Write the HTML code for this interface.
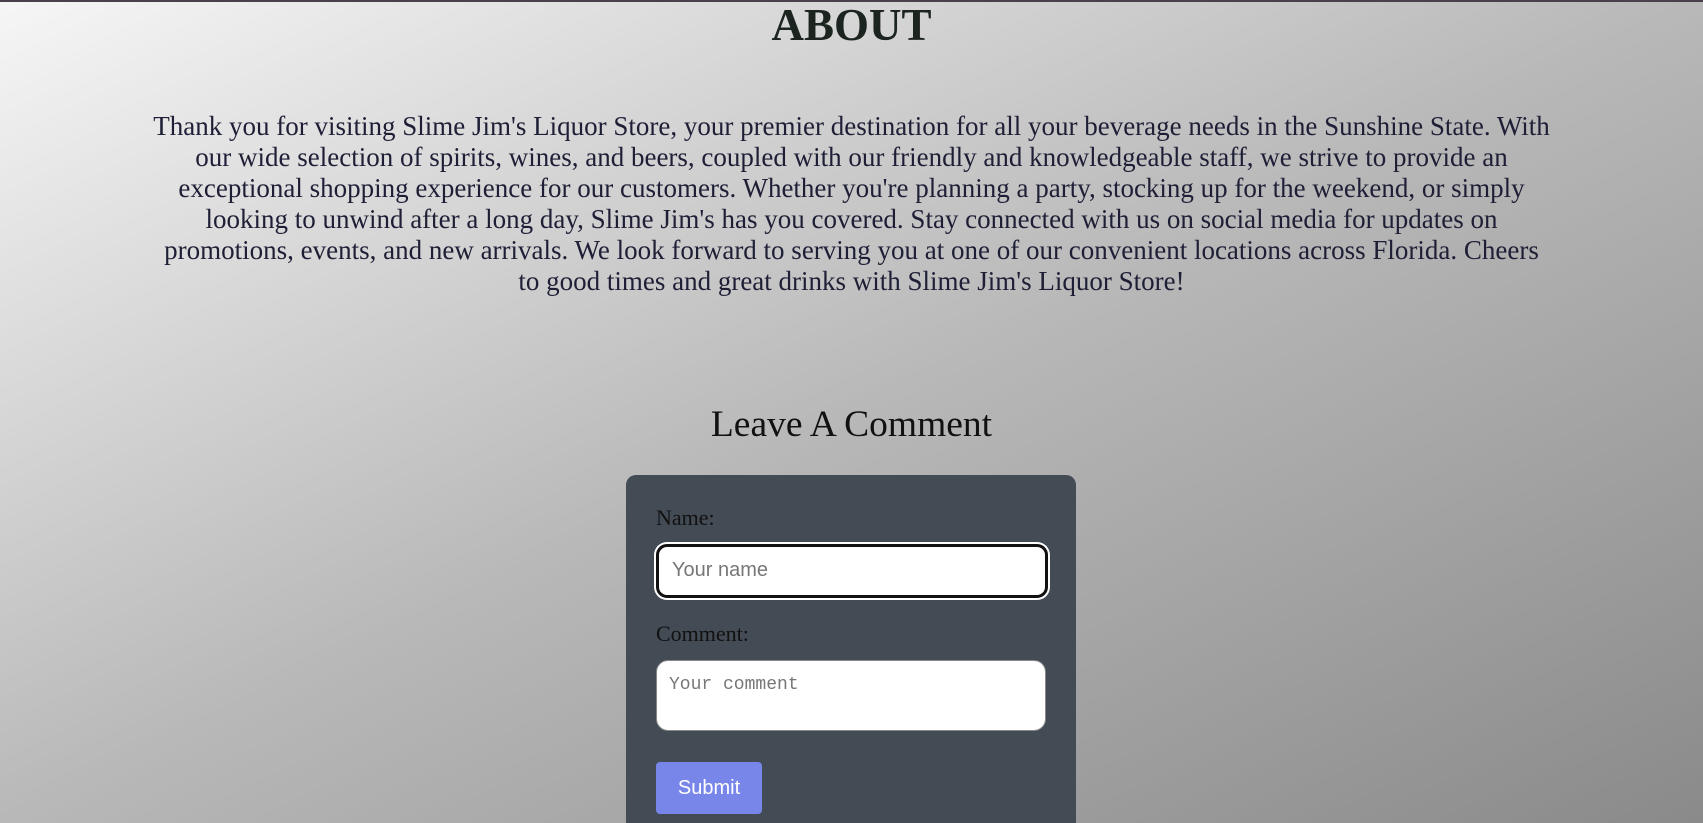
<!DOCTYPE html>
<html style="width:1703px;height:823px;overflow:hidden;background:#999;"><head><style>
html,body{margin:0;padding:0;}
body{width:1703px;height:823px;overflow:hidden;position:relative;
background:linear-gradient(to bottom right,#f6f6f6 0%,#b8b8b8 50%,#8a8a8a 100%);
font-family:"Liberation Serif",serif;}
.bar{position:absolute;left:0;top:0;width:100%;height:2px;background:#4a3f4a;}
h1{position:absolute;left:0;width:100%;top:-1px;margin:0;text-align:center;font-size:45px;font-weight:bold;color:#1c2420;}
p{position:absolute;left:100px;width:1503px;top:111px;margin:0;text-align:center;font-size:27px;line-height:31px;color:#1e1e36;}
h2{position:absolute;left:0;width:100%;top:403px;margin:0;text-align:center;font-size:37.5px;font-weight:normal;color:#111;}
.card{position:absolute;left:626px;top:475px;width:450px;height:348px;background:#434b55;border-radius:10px 10px 0 0;}
.lbl{position:absolute;left:30px;font-size:22px;color:#111;}
.inp{position:absolute;left:30px;top:69px;width:386px;height:48px;background:#fff;border:3px solid #111;border-radius:11px;box-shadow:0 0 0 2px #fff;box-sizing:content-box;}
.inp span{position:absolute;left:13px;top:12px;font-family:"Liberation Sans",sans-serif;font-size:20px;color:#777;}
.ta{position:absolute;left:30px;top:185px;width:388px;height:69px;background:#fff;border:1px solid #888;border-radius:12px;}
.ta span{position:absolute;left:12px;top:14px;font-family:"Liberation Mono",monospace;font-size:18px;color:#777;}
.btn{position:absolute;left:30px;top:287px;width:106px;height:52px;background:#7886ea;border-radius:4px;color:#fff;font-family:"Liberation Sans",sans-serif;font-size:20px;text-align:center;line-height:52px;}
</style></head><body>
<div class="bar"></div>
<h1>ABOUT</h1>
<p>Thank you for visiting Slime Jim's Liquor Store, your premier destination for all your beverage needs in the Sunshine State. With<br>our wide selection of spirits, wines, and beers, coupled with our friendly and knowledgeable staff, we strive to provide an<br>exceptional shopping experience for our customers. Whether you're planning a party, stocking up for the weekend, or simply<br>looking to unwind after a long day, Slime Jim's has you covered. Stay connected with us on social media for updates on<br>promotions, events, and new arrivals. We look forward to serving you at one of our convenient locations across Florida. Cheers<br>to good times and great drinks with Slime Jim's Liquor Store!</p>
<h2>Leave A Comment</h2>
<div class="card">
<div class="lbl" style="top:30px">Name:</div>
<div class="inp"><span>Your name</span></div>
<div class="lbl" style="top:146px">Comment:</div>
<div class="ta"><span>Your comment</span></div>
<div class="btn">Submit</div>
</div>
</body></html>
